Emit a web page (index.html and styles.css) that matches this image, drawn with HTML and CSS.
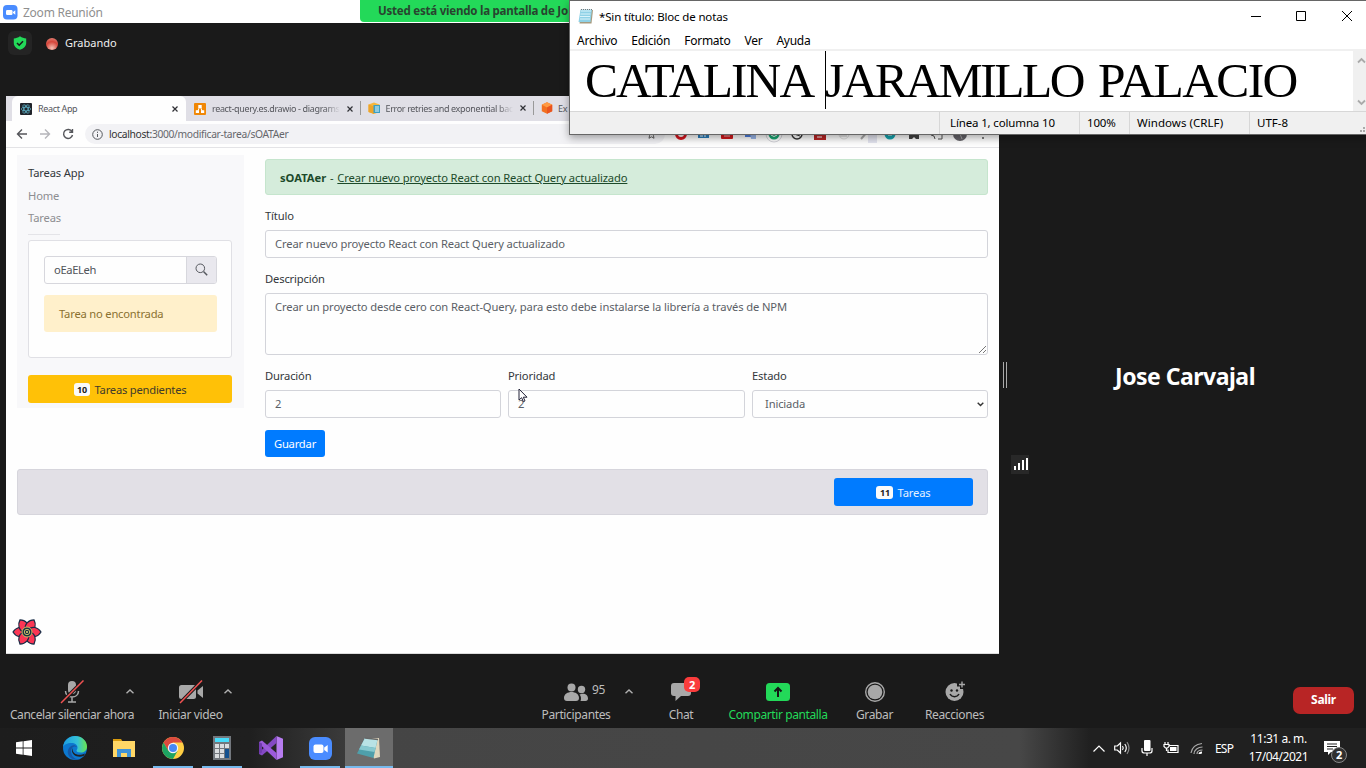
FILE: index.html
```html
<!DOCTYPE html>
<html lang="es">
<head>
<meta charset="utf-8">
<title>Zoom Reunión</title>
<link rel="stylesheet" href="styles.css">
</head>
<body>
<div class="desktop">
  <header class="zoom-title">
    <svg width="15" height="15" viewBox="0 0 15 15"><rect width="14.500" height="14.500" rx="4" fill="#4a8cff"/><rect x="3" y="5" width="6.500" height="5" rx="1.200" fill="#fff"/><path d="M10 7l2.300-1.700v4.400L10 8z" fill="#fff"/></svg>
    <span>Zoom Reunión</span>
  </header>
  <div class="sharing-banner">Usted está viendo la pantalla de Jo</div>

  <section class="meeting">
    <div class="meeting-status">
      <div class="shield"><svg width="14" height="14" viewBox="0 0 14 14"><path d="M7 0.300C9 1.700 11 2.200 13.200 2.400V7c0 3.200-2.700 5.600-6.200 6.800C3.500 12.600.8 10.200.8 7V2.400C3 2.200 5 1.700 7 .3z" fill="#23d959"/><path d="M4 7l2.200 2.200L10 5.200" fill="none" stroke="#1a1a1a" stroke-width="1.600"/></svg></div>
      <span class="rec-dot"></span>
      <span class="rec-label">Grabando</span>
    </div>

    <div class="stage">
      <div class="browser">
        <div class="tabs">
          <div class="tab tab-active">
            <svg width="12" height="12" viewBox="0 0 12 12"><rect width="12" height="12" rx="1" fill="#20232a"/><g fill="none" stroke="#61b9cf" stroke-width=".7"><ellipse cx="6" cy="6" rx="4.800" ry="1.900"/><ellipse cx="6" cy="6" rx="4.800" ry="1.900" transform="rotate(60 6 6)"/><ellipse cx="6" cy="6" rx="4.800" ry="1.900" transform="rotate(120 6 6)"/></g></svg>
            <span class="tab-name">React App</span><svg class="x" viewBox="0 0 6 6"><path d="M.5.5l5 5M5.500.5l-5 5"/></svg>
          </div>
          <div class="tab">
            <svg width="12" height="12" viewBox="0 0 12 12"><rect width="12" height="12" rx="1" fill="#f08705"/><path d="M6 3L3.500 9M6 3l2.500 6" stroke="#fff"/><path d="M4.300 2h3.400v3H4.300zM1.800 7.200H5V10H1.800zM7 7.200h3.200V10H7z" fill="#fff"/></svg>
            <span class="tab-name faded">react-query.es.drawio - diagrams</span><svg class="x" viewBox="0 0 6 6"><path d="M.5.5l5 5M5.500.5l-5 5"/></svg>
          </div>
          <div class="tab">
            <svg width="13" height="12" viewBox="0 0 13 12"><path d="M.5 2.500L6 .5l5.500 2V10L6 12 .5 10z" fill="#f6b73c"/><path d="M.5 2.500L6 4.500v7.500L.5 10z" fill="#eda42b"/><rect x="5.500" y="3" width="6.500" height="8" fill="#3b9fc4"/><path d="M7 5h4M7 7h4M7 9h4" stroke="#e6f6fb"/></svg>
            <span class="tab-name faded">Error retries and exponential bac</span><svg class="x" viewBox="0 0 6 6"><path d="M.5.5l5 5M5.500.5l-5 5"/></svg>
          </div>
          <div class="tab">
            <svg width="12" height="12" viewBox="0 0 12 12"><path d="M6 .3l5.200 2.500v6.400L6 11.800.8 9.200V2.800z" fill="#f27020"/><path d="M6 .3l5.200 2.500L6 5.500.8 2.800z" fill="#ff9a44"/><path d="M6 5.500l5.200-2.700v6.400L6 11.800z" fill="#e95420"/></svg>
            <span class="tab-name">Ex</span>
          </div>
        </div>
        <div class="navbar">
          <svg class="nav-icon" viewBox="0 0 12 12"><path d="M11 6H1.500M6 1.500L1.500 6 6 10.500"/></svg>
          <svg class="nav-icon dim" viewBox="0 0 12 12"><path d="M1 6h9.500M6 1.500L10.500 6 6 10.500"/></svg>
          <svg class="nav-icon" viewBox="0 0 12 12"><path d="M10 3.700A4.500 4.500 0 1 0 10.500 7M10.500 1v3.300H7.200"/></svg>
          <div class="address">
            <svg width="11" height="11" viewBox="0 0 11 11" fill="none" stroke="#55585d"><circle cx="5.500" cy="5.500" r="4.800"/><path d="M5.500 5v3M5.500 2.700v1.200"/></svg>
            <span><b>localhost:</b>3000/modificar-tarea/sOATAer</span>
            <svg class="star" width="9" height="9" viewBox="0 0 10 10"><path d="M5 .8l1.300 2.900 3.100.3-2.300 2.100.7 3.100L5 7.600 2.200 9.200l.7-3.100L.6 4l3.100-.3z" fill="none" stroke="#555"/></svg>
          </div>
          <svg class="extensions" width="314" height="24" viewBox="674 122 314 24">
            <circle cx="681" cy="134" r="4.500" fill="none" stroke="#d8151e" stroke-width="3"/>
            <rect x="698" y="129" width="11" height="9" fill="#2b7fbd"/><path d="M700 136h3M705 137v-4" stroke="#fff"/>
            <rect x="721" y="129" width="12" height="10" rx="1" fill="#d3191c"/><path d="M724 136h6" stroke="#fff" stroke-width=".7"/>
            <rect x="745" y="129" width="7" height="8" fill="#4d7fe0"/><path d="M750 132h6v7h-5z" fill="#9bb7ea"/>
            <circle cx="774" cy="134" r="8" fill="#fff" stroke="#d5d5db"/><circle cx="774" cy="134" r="5.500" fill="#19a974"/><path d="M771 135q3 3 6 0" fill="none" stroke="#fff"/>
            <circle cx="797" cy="134" r="5" fill="none" stroke="#333" stroke-width="1.500"/><path d="M794 134l6 2" stroke="#333"/>
            <rect x="814" y="129" width="12" height="11" fill="#b82525"/><path d="M817 137h5" stroke="#fff"/>
            <circle cx="844" cy="134" r="5" fill="none" stroke="#ddd"/><path d="M840 136h7" stroke="#ccc"/>
            <path d="M861 139l8-9" stroke="#aaa" stroke-width="2"/><rect x="868" y="134" width="9" height="9" fill="#e4e5f0"/>
            <circle cx="890" cy="134" r="5.500" fill="#14a5b0"/><path d="M888 135h4" stroke="#fff"/>
            <path d="M909 132h3c0-3 4-3 4 0h3v7h-3l-2-2-2 2h-3z" fill="#444"/>
            <path d="M931 131h11v8h-4M931 135q4 0 4 4" fill="none" stroke="#555"/>
            <circle cx="960" cy="134" r="7" fill="#66646a"/><path d="M954 133q5-4 8 6" stroke="#aaa" fill="none"/>
            <circle cx="983" cy="134" r="1" fill="#555"/><circle cx="983" cy="138" r="1" fill="#555"/>
          </svg>
        </div>

        <div class="page">
          <div class="columns">
            <aside class="sidebar">
              <a class="brand">Tareas App</a>
              <a class="side-link">Home</a>
              <a class="side-link">Tareas</a>
              <div class="side-rule"></div>
              <div class="search-card">
                <div class="search-group"><div class="search-input">oEaELeh</div><div class="search-btn"><svg width="13" height="13" viewBox="0 0 13 13" fill="none" stroke="#55585e"><circle cx="5.300" cy="5.300" r="4.300"/><path d="M8.500 8.500l3.700 3.700" stroke-width="1.500"/></svg></div></div>
                <div class="warning">Tarea no encontrada</div>
              </div>
              <div class="pending"><span class="count">10</span> <span>Tareas pendientes</span></div>
            </aside>
            <main class="form">
              <div class="success"><b>sOATAer</b> - <u>Crear nuevo proyecto React con React Query actualizado</u></div>
              <label>Título</label>
              <div class="field title-field">Crear nuevo proyecto React con React Query actualizado</div>
              <label>Descripción</label>
              <div class="field area"><span>Crear un proyecto desde cero con React-Query, para esto debe instalarse la librería a través de NPM</span><svg class="grip" width="7" height="7" viewBox="0 0 7 7"><path d="M0 7l7-7M4 7l3-3" stroke="#777"/></svg></div>
              <div class="row3">
                <div><label>Duración</label><div class="field">2</div></div>
                <div><label>Prioridad</label><div class="field prio">2<svg class="cursor" width="10" height="15" viewBox="0 0 10 15"><path d="M1 1v11l2.600-2.300 1.800 4 1.600-.8-1.700-3.700H9z" fill="#fff" stroke="#222238"/></svg></div></div>
                <div><label>Estado</label><div class="field select"><span>Iniciada</span><svg width="7" height="5" viewBox="0 0 7 5"><path d="M.7.7l2.800 2.800L6.300.7" fill="none" stroke="#333" stroke-width="1.400"/></svg></div></div>
              </div>
              <button class="save">Guardar</button>
            </main>
          </div>
          <footer class="page-foot"><div class="tasks"><span class="count">11</span> <span>Tareas</span></div></footer>
          <svg class="rq-logo" width="30" height="30" viewBox="-15 -15 30 30"><g fill="#fb3654" stroke="#172b46" stroke-width="1.200"><path d="M-2-3C-5-6-11-5-14 0-11 5-5 6-2 3z"/><path d="M-2-3C-5-6-11-5-14 0-11 5-5 6-2 3z" transform="rotate(60)"/><path d="M-2-3C-5-6-11-5-14 0-11 5-5 6-2 3z" transform="rotate(120)"/><path d="M-2-3C-5-6-11-5-14 0-11 5-5 6-2 3z" transform="rotate(180)"/><path d="M-2-3C-5-6-11-5-14 0-11 5-5 6-2 3z" transform="rotate(240)"/><path d="M-2-3C-5-6-11-5-14 0-11 5-5 6-2 3z" transform="rotate(300)"/></g><circle r="5" fill="#1a3044" stroke="#c6bd63"/><circle r="2.700" fill="none" stroke="#c6bd63"/><circle r="1" fill="#e9d970"/></svg>
        </div>
      </div>
      <div class="speaker">
        <div class="handle"></div>
        <div class="speaker-name">Jose Carvajal</div>
        <div class="signal"><i></i><i></i><i></i><i></i></div>
      </div>
    </div>

    <nav class="controls">
      <div class="ctl ctl-audio"><svg width="24" height="24" viewBox="0 0 24 24"><rect x="8" y="1" width="8" height="13" rx="4" fill="#a8a8a8"/><path d="M5.500 11c0 8 13 8 13 0M12 17v4.500M8 22h8" fill="none" stroke="#a8a8a8" stroke-width="1.500"/><path d="M1 23L23.500.5" stroke="#1a1a1a" stroke-width="3.500"/><path d="M1 23L23.500.5" stroke="#f05252" stroke-width="1.500"/></svg><span>Cancelar silenciar ahora</span><svg class="caret" viewBox="0 0 8 5"><path d="M.5 4.300L4 1l3.500 3.300"/></svg></div>
      <div class="ctl ctl-video"><svg width="26" height="24" viewBox="0 0 26 24"><rect x="1" y="5" width="17" height="14" rx="2.500" fill="#a8a8a8"/><path d="M19.500 10.500L25 6v12l-5.500-4.500z" fill="#a8a8a8"/><path d="M2 23L24 .5" stroke="#1a1a1a" stroke-width="3.500"/><path d="M2 23L24 .5" stroke="#f05252" stroke-width="1.500"/></svg><span>Iniciar video</span><svg class="caret" viewBox="0 0 8 5"><path d="M.5 4.300L4 1l3.500 3.300"/></svg></div>
      <div class="ctl ctl-people"><svg width="24" height="24" viewBox="0 0 24 24" fill="#a8a8a8"><circle cx="7.500" cy="7.500" r="4"/><circle cx="17.500" cy="9.500" r="3.700"/><path d="M0 18c0-8 15-8 15 0 0 2-1 3-3 3H3c-2 0-3-1-3-3zM16.500 21c1-2 .5-5-1-6.500 5-2 8.500.5 8.500 4 0 1.600-.8 2.500-2.500 2.500z"/></svg><span>Participantes</span><em>95</em><svg class="caret" viewBox="0 0 8 5"><path d="M.5 4.300L4 1l3.500 3.300"/></svg></div>
      <div class="ctl ctl-chat"><svg width="22" height="24" viewBox="0 0 22 24"><path d="M4 3h14q3 0 3 3v7q0 3-3 3h-7l-5.500 5v-5H4q-3 0-3-3V6q0-3 3-3z" fill="#a8a8a8"/></svg><span>Chat</span><strong>2</strong></div>
      <div class="ctl ctl-share"><svg width="24" height="24" viewBox="0 0 24 24"><rect y="3" width="24" height="18" rx="3.500" fill="#23d959"/><path d="M12 17V8M8.500 11.500L12 8l3.500 3.500" fill="none" stroke="#151515" stroke-width="2"/></svg><span>Compartir pantalla</span></div>
      <div class="ctl ctl-record"><svg width="22" height="24" viewBox="0 0 22 24"><circle cx="11" cy="12" r="9.300" fill="none" stroke="#a8a8a8" stroke-width="1.400"/><circle cx="11" cy="12" r="7.300" fill="#a8a8a8"/></svg><span>Grabar</span></div>
      <div class="ctl ctl-react"><svg width="24" height="24" viewBox="0 0 24 24"><circle cx="11.500" cy="12" r="9" fill="#a8a8a8"/><path d="M14 4.500h10M19 0v9" stroke="#1a1a1a" stroke-width="4"/><path d="M16 4.500h6M19 1.500v6" stroke="#a8a8a8" stroke-width="1.400"/><circle cx="8.500" cy="10.500" r="1.200" fill="#1a1a1a"/><circle cx="14" cy="10.500" r="1.200" fill="#1a1a1a"/><path d="M7 14c2 3.500 7 3.500 9 0" fill="none" stroke="#1a1a1a" stroke-width="1.500"/></svg><span>Reacciones</span></div>
      <div class="leave">Salir</div>
    </nav>
  </section>

  <footer class="taskbar">
    <div class="app start"><svg width="16" height="16" viewBox="0 0 16 16" fill="#fff"><path d="M0 2.300L6.700 1.300v6.200H0zM7.500 1.200L16 0v7.500H7.500zM0 8.400h6.700v6.300L0 13.700zM7.500 8.400H16V16l-8.500-1.200z"/></svg></div>
    <div class="app"><svg width="24" height="24" viewBox="0 0 24 24"><defs><linearGradient id="eg" x1="0" x2="1"><stop offset="0" stop-color="#1b9de2"/><stop offset=".6" stop-color="#35c1d8"/><stop offset="1" stop-color="#6ae64d"/></linearGradient></defs><circle cx="12" cy="12" r="12" fill="#0c78cf"/><path d="M0 11C1 4 6 0 12 0c7 0 12 5 12 10.500 0 4-3 6-6 6-3.500 0-4.500-1-4.500-2 0-.8 1-1 1-3C14.500 9 12 7 8.500 7 4 7 1 9 0 11z" fill="url(#eg)"/><path d="M9 12c-3 6 2 12 8 11-9 3-15-5-11-11 2-3 6-4 8-1-2-1-4-.5-5 1z" fill="#1557a5"/><path d="M10 12c-2 5 5 9 12 5.500l-1 2.300c-6 2.500-12-.5-12-5 0-1 .3-2 1-2.800z" fill="#202124"/></svg></div>
    <div class="app"><svg width="22" height="20" viewBox="0 0 22 20"><path d="M0 1h8l2 3H0z" fill="#d99b0d"/><rect y="3" width="22" height="16" fill="#ffd766"/><path d="M4 19v-8h14v8h-4v-4H8v4z" fill="#3f93d7"/></svg></div>
    <div class="app open"><svg width="22" height="22" viewBox="0 0 22 22"><circle cx="11" cy="11" r="11" fill="#ffce44"/><path d="M1.500 5.500A11 11 0 0 1 20.500 5.500H11L6.300 14z" fill="#db4a3e"/><path d="M1.500 5.500A11 11 0 0 0 11 22l4.500-8H6.500z" fill="#1da362"/><circle cx="11" cy="11" r="5.200" fill="#f5f5f5"/><circle cx="11" cy="11" r="4" fill="#4687f4"/></svg></div>
    <div class="app open"><svg width="18" height="24" viewBox="0 0 18 24"><rect width="18" height="24" fill="#72777d"/><rect x="2" y="2" width="14" height="4" fill="#48dcfa"/><path d="M2 8h4v4H2zM7 8h4v4H7zM12 8h4v4h-4zM2 13h4v4H2zM7 13h4v4H7zM2 18h4v4H2zM7 18h4v4H7z" fill="#dadde0"/><path d="M12 13h4v9h-4z" fill="#13508e"/></svg></div>
    <div class="app"><svg width="24" height="24" viewBox="0 0 24 24"><path d="M17.500 0L24 2.700v18.600L17.500 24z" fill="#b77cf0"/><path d="M17.500 0v7L3 19.500 0 18v-1.500z" fill="#8449c4"/><path d="M17.500 24v-7L3 4.500 0 6v1.500z" fill="#9c5bdb"/><path d="M0 6l3 1.500v9L0 18z" fill="#713bae"/></svg></div>
    <div class="app open"><svg width="23" height="23" viewBox="0 0 23 23"><rect width="23" height="23" rx="6" fill="#4a8cff"/><rect x="4.500" y="7.500" width="10" height="8.500" rx="2" fill="#fff"/><path d="M15.200 10.500l3.500-2.500v7.500l-3.500-2.500z" fill="#fff"/></svg></div>
    <div class="app open current"><svg width="24" height="22" viewBox="0 0 24 22"><path d="M8 1h14l1 19-6 1.500z" fill="#dfd6bd"/><path d="M8 1l12.500 1.500L16.500 21 0 16.500z" fill="#4f9fab"/><path d="M8 1l12.500 1.500-2 8.500L4 8.500z" fill="#b8e2e5"/><path d="M4 8.500L18.500 11l-1 4L2 12.500z" fill="#86c8cf"/><path d="M8 1l13 1.500" stroke="#666" stroke-width="1.500"/></svg></div>
    <div class="tray">
      <svg class="t1" width="14" height="9" viewBox="0 0 14 9"><path d="M1.500 7.500L7 2l5.500 5.500"/></svg>
      <svg class="t2" width="16" height="14" viewBox="0 0 16 14"><path d="M.7 5h2.600L6.500 2v10L3.300 9H.7zM8.500 5q1.500 2 0 4M10.800 3q3 4 0 8"/><path d="M13 1.200q4 5.800 0 11.600" stroke="#888"/></svg>
      <svg class="t3" width="12" height="16" viewBox="0 0 12 16"><rect x="3" width="6.500" height="11" rx="1" fill="#fff" stroke="none"/><path d="M1 8v3q0 2 2.500 2h5q2.500 0 2.500-2V8M6 13v3"/></svg>
      <svg class="t4" width="17" height="12" viewBox="0 0 17 12"><path d="M5.500 3.500H15v7H5v-3M2 0v2M5 0v2M1 2.500h5v2L4.500 6H2.500L1 4.500zM3.500 6v3"/><rect x="7" y="5" width="6.500" height="4" fill="#fff" stroke="none"/></svg>
      <svg class="t5" width="14" height="13" viewBox="0 0 14 13"><path d="M1 11C2 5 7 2 12 1.500M4 12c0-4 4-7 8.500-7M7 12c0-2.500 2.500-4 5.500-4" stroke="#aaa"/><path d="M9.500 12c0-1 1-1.500 2.500-1.500" stroke-width="2"/></svg>
      <span class="lang">ESP</span>
      <div class="clock"><span>11:31 a. m.</span><span>17/04/2021</span></div>
      <div class="notif"><svg width="16" height="15" viewBox="0 0 16 15"><path d="M0 0h16v11H7l-3 3v-3H0z" fill="#fff" stroke="none"/><path d="M3 3h10M3 5.500h10M3 8h6" stroke="#222"/></svg><b>2</b></div>
    </div>
  </footer>

  <section class="notepad">
    <div class="np-title">
      <svg width="16" height="16" viewBox="0 0 16 16"><path d="M3 2h12l-1.500 13.500H1.500z" fill="#a59a7f"/><path d="M2.500 1.500h11.500L12.500 14H.5z" fill="#8fd1e6"/><path d="M3 3h10M2.500 6h10M2 8.500h10M2 11h10" stroke="#d9f3fa"/><path d="M3 1.500h11" stroke="#777" stroke-dasharray="1 1"/></svg>
      <span class="np-name">*Sin título: Bloc de notas</span>
      <svg class="np-btns" width="102" height="12" viewBox="0 0 102 12" fill="none" stroke="#000"><path d="M1 6.500h10M46.500 1.500h9v9h-9zM92 1l10 10M102 1L92 11"/></svg>
    </div>
    <div class="np-menu"><span>Archivo</span><span>Edición</span><span>Formato</span><span>Ver</span><span>Ayuda</span></div>
    <div class="np-body">
      <div class="np-text"><span class="w1">CATALINA</span><i class="np-caret"></i><span class="w2">JARAMILLO</span><span class="w3">PALACIO</span></div>
      <div class="np-scroll"><svg width="9" height="7" viewBox="0 0 9 7"><path d="M1 5.500L4.500 2 8 5.500"/></svg><svg width="9" height="7" viewBox="0 0 9 7"><path d="M1 1.500L4.500 5 8 1.500"/></svg></div>
    </div>
    <div class="np-status"><span class="s0"></span><span class="s1">Línea 1, columna 10</span><span class="s2">100%</span><span class="s3">Windows (CRLF)</span><span class="s4">UTF-8</span>
      <svg class="np-grip" width="5" height="5" viewBox="0 0 5 5" fill="#aaa"><path d="M3 0h2v2H3zM0 3h2v2H0zM3 3h2v2H3z"/></svg></div>
  </section>
</div>
</body>
</html>
```
FILE: styles.css
```css
* { box-sizing: border-box; }
body { margin: 0; font-family: "Noto Sans", "Open Sans", sans-serif; font-size: 12px; }
svg { display: block; flex: none; }
.desktop { position: relative; width: 1366px; height: 768px; overflow: hidden; display: flex; flex-direction: column; background: #1a1a1a; }

/* Zoom window */
.zoom-title { height: 23px; background: #fff; display: flex; align-items: center; gap: 5px; padding: 1px 0 0 3px; color: #8f8f8f; font-size: 12px; letter-spacing: -.25px; }
.sharing-banner { position: absolute; left: 360px; top: 0; width: 300px; height: 22px; padding-left: 18px; line-height: 22px; background: #23d959; border-radius: 0 0 4px 4px; color: #28442f; font-weight: 700; font-size: 11.500px; letter-spacing: -.22px; white-space: nowrap; }
.meeting { flex: 1; display: flex; flex-direction: column; }
.meeting-status { height: 73px; padding: 8px 0 0 8px; display: flex; align-items: flex-start; }
.shield { width: 24px; height: 24px; border-radius: 6px; background: #242424; display: flex; align-items: center; justify-content: center; }
.rec-dot { width: 12px; height: 12px; margin: 7px 7px 0 14px; border-radius: 50%; background: radial-gradient(circle at 50% 85%, #f7c1b5, #d6453a 55%, #e59387); }
.rec-label { color: #f0f0f0; font-size: 11px; line-height: 24px; }
.stage { height: 558px; display: flex; padding-left: 6px; }
.browser { width: 993px; background: #fefefe; display: flex; flex-direction: column; }

/* browser chrome */
.tabs { height: 25px; background: #e0dfe6; display: flex; padding-left: 6px; }
.tab { width: 173.500px; display: flex; align-items: center; padding: 0 8px 0 8px; color: #55565c; font-size: 9px; }
.tab svg:first-child { margin-right: 6px; }
.tab + .tab + .tab { border-left: 1px solid #999; height: 14px; margin-top: 5px; padding-left: 7px; }
.tab + .tab + .tab svg:first-child { margin-right: 5px; }
.tab-active { width: 174px; background: #fefefe; border-radius: 6px 6px 0 0; }
.tab-name { flex: 1; white-space: nowrap; margin-right: 7px; letter-spacing: -.35px; }
.faded { -webkit-mask-image: linear-gradient(90deg, #000 88%, transparent); mask-image: linear-gradient(90deg, #000 88%, transparent); }
.x { width: 6px; height: 6px; fill: none; stroke: #303136; stroke-width: 1.200; }
.navbar { height: 27px; border-bottom: 1px solid #e3e3e6; display: flex; align-items: center; padding-left: 10px; }
.nav-icon { width: 12px; height: 12px; margin-right: 11px; fill: none; stroke: #55565b; stroke-width: 1.400; }
.nav-icon.dim { stroke: #b5b5ba; }
.address { width: 580px; height: 20px; border-radius: 10px; background: #f2f2f5; display: flex; align-items: center; padding: 0 9px 0 7px; gap: 6px; color: #66676c; font-size: 10.300px; letter-spacing: -.34px; }
.address b { font-weight: 400; color: #333; }
.star { margin-left: auto; }
.extensions { margin-left: 9px; }

/* task application */
.page { position: relative; flex: 1; padding: 7px 11px 0; color: #33373b; font-size: 11.200px; letter-spacing: -.15px; border-bottom: 1px solid #ddd; }
.columns { display: flex; height: 314px; gap: 21px; }
.sidebar { width: 227px; height: 253px; background: #f8f8fa; padding: 7px 12px 0 11px; display: flex; flex-direction: column; }
.brand, .side-link { height: 22.500px; line-height: 22px; }
.side-link { color: #8d8e91; line-height: 21px; }
.side-rule { width: 32px; border-bottom: 1px solid #e4e4e8; height: 5px; }
.search-card { margin-top: 5px; height: 118px; border: 1px solid #e0e0e5; border-radius: 3px; background: #fefefe; padding: 15px 14px 0 15px; }
.search-group { display: flex; height: 28px; border: 1px solid #d7d7dd; border-radius: 3px; overflow: hidden; line-height: 26px; }
.search-input { flex: 1; padding-left: 9px; color: #50545a; letter-spacing: -.35px; }
.search-btn { width: 30px; background: #e9e8ee; border-left: 1px solid #d7d7dd; display: flex; align-items: center; justify-content: center; }
.warning { margin-top: 11px; height: 37px; line-height: 37px; padding-left: 15px; border-radius: 3px; background: #fff0cb; color: #8a7130; letter-spacing: -.2px; }
.pending, .tasks { display: flex; align-items: center; justify-content: center; gap: 4px; border-radius: 3px; height: 28px; }
.pending { margin-top: 17px; background: #ffc107; color: #403a2c; letter-spacing: -.22px; padding-top: 1px; }
.count { height: 13px; line-height: 13px; padding: 0 3.500px; border-radius: 3px; background: #fafafa; color: #222; font-size: 9px; font-weight: 700; }
.form { width: 723px; padding-top: 4px; }
.form label { display: block; height: 35px; line-height: 41px; }
.success { height: 36px; line-height: 35px; padding-left: 14px; border: 1px solid #c5e5cd; border-radius: 3px; background: #d5ecdb; color: #1c4a2a; letter-spacing: -.12px; white-space: nowrap; }
.success b { letter-spacing: 0; margin-right: 1px; }
.success u { margin-left: 1px; }
.field { position: relative; height: 28px; line-height: 26px; border: 1px solid #d3d4da; border-radius: 3px; padding-left: 9px; color: #5b5f66; }
.title-field { letter-spacing: -.12px; }
.area { height: 62px; white-space: nowrap; letter-spacing: -.11px; }
.grip { position: absolute; right: 1px; bottom: 1px; }
.row3 { display: grid; grid-template-columns: 236px 237px 236px; gap: 7px; }
.cursor { position: absolute; left: 9px; top: -3px; }
.select { display: flex; align-items: center; justify-content: space-between; padding: 0 3px 0 12px; }
.save { display: block; margin-top: 12px; width: 60px; height: 27px; border: 0; border-radius: 3px; background: #007bff; color: #fff; font: inherit; letter-spacing: -.2px; padding: 0 0 1px; }
.page-foot { width: 971px; height: 46px; border: 1px solid #d6d5dc; border-radius: 3px; background: #e2e0e6; display: flex; justify-content: flex-end; align-items: center; padding-right: 14px; }
.tasks { width: 139px; background: #007bff; color: #e4f1ff; }
.rq-logo { position: absolute; left: 6px; bottom: 6px; }

/* speaker pane */
.speaker { flex: 1; position: relative; display: flex; align-items: center; justify-content: center; }
.handle { position: absolute; left: 4px; top: 266px; width: 4px; height: 26px; border: 1px solid #aaa; border-width: 0 1px; }
.speaker-name { color: #fff; font: 700 23px "Noto Sans", sans-serif; white-space: nowrap; margin: 2px 0 0 5px; letter-spacing: -.5px; }
.signal { position: absolute; left: 12px; top: 359px; width: 18px; height: 19px; background: #282828; display: flex; align-items: flex-end; gap: 2px; padding: 0 0 4px 3px; }
.signal i { width: 2px; height: 4px; background: #fff; }
.signal i:nth-child(2) { height: 7px; } .signal i:nth-child(3) { height: 10px; } .signal i:nth-child(4) { height: 12px; }

/* meeting controls */
.controls { height: 74px; padding-top: 26px; display: flex; }
.ctl { position: relative; display: flex; flex-direction: column; align-items: center; color: #bdbdbd; font-size: 12px; letter-spacing: -.36px; white-space: nowrap; }
.ctl > span { line-height: 20px; margin-top: 1px; }
.ctl-audio { width: 144px; letter-spacing: -.45px; } .ctl-video { width: 93px; } .ctl-people { width: 96px; margin-left: 291px; } .ctl-chat { width: 98px; margin-left: 8px; } .ctl-share { width: 96px; } .ctl-record { width: 97px; } .ctl-react { width: 63px; }
.ctl-share { color: #23d959; letter-spacing: -.4px; }
.caret { position: absolute; top: 9px; width: 8px; height: 5px; fill: none; stroke: #b0b0b0; stroke-width: 1.400; }
.ctl-audio .caret { left: 126px; } .ctl-video .caret { left: 80px; } .ctl-people .caret { left: 97px; }
.ctl em { position: absolute; left: 64px; top: 1px; font-style: normal; }
.ctl strong { position: absolute; left: 52px; top: -3px; width: 16px; height: 15px; border-radius: 5px; background: #fa3c3c; color: #fff; font-size: 11px; line-height: 15px; text-align: center; }
.leave { margin: -7px 12px 0 auto; width: 61px; height: 27px; line-height: 26px; border-radius: 7px; background: #b82525; color: #fff; font-weight: 700; text-align: center; letter-spacing: -.3px; align-self: center; }

/* Windows taskbar */
.taskbar { height: 40px; display: flex; gap: 1px; background: linear-gradient(90deg, #1d1d1d 0, #1f1f1f 250px, #454545 380px, #474747 1020px, #202020 1090px, #202020); }
.app { width: 48px; display: flex; align-items: center; justify-content: center; position: relative; }
.start { margin-right: 2px; }
.open::after { content: ""; position: absolute; bottom: 0; left: 4px; width: 40px; height: 2px; background: #76b9ed; }
.current { background: #6c6c6c; }
.current::after { left: 0; width: 48px; }
.tray { margin-left: auto; width: 276px; display: flex; align-items: center; color: #fff; letter-spacing: -.45px; }
.tray svg { fill: none; stroke: #fff; stroke-width: 1.200; }
.t1 { margin: 0 8px 0 2px; } .t2 { margin-right: 11px; } .t3 { margin-right: 10px; } .t4 { margin-right: 10px; } .t5 { margin-right: 11px; }
.lang { width: 32px; letter-spacing: -.8px; }
.clock { width: 63px; display: flex; flex-direction: column; align-items: center; line-height: 18px; white-space: nowrap; }
.notif { position: relative; margin-left: 14px; }
.notif b { position: absolute; left: 7px; top: 6px; width: 16px; height: 16px; border: 1px solid #888; border-radius: 50%; background: #303030; font-size: 11px; line-height: 14px; text-align: center; }

/* Notepad */
.notepad { position: absolute; left: 569px; top: 0; width: 798px; height: 135px; border: 1px solid #666; background: #fff; box-shadow: 0 3px 8px rgba(0,0,0,.35); display: flex; flex-direction: column; color: #000; font-size: 11.500px; letter-spacing: -.15px; }
.np-title { flex: none; height: 30px; display: flex; align-items: center; padding: 0 14px 0 8px; gap: 5px; }
.np-btns { margin-left: auto; }
.np-menu { flex: none; height: 18px; line-height: 19px; display: flex; gap: 14px; padding-left: 7px; font-size: 12px; letter-spacing: -.25px; }
.np-body { flex: none; height: 62px; border-top: 2px solid #f0f0f0; display: flex; }
.np-text { flex: 1; display: flex; padding-left: 15px; font: 49.500px/60px "Liberation Serif", serif; white-space: nowrap; }
.w1 { width: 240px; letter-spacing: -1.900px; } .w2 { width: 273px; letter-spacing: -2.500px; } .w3 { letter-spacing: -1.600px; }
.np-caret { width: 1px; margin-right: -1px; height: 58px; background: #000; }
.np-scroll { width: 13px; background: #f0f0f0; display: flex; flex-direction: column; justify-content: space-between; align-items: flex-end; padding: 6px 0 5px; }
.np-scroll path { fill: none; stroke: #aaa; stroke-width: 1.800; }
.np-status { position: relative; flex: 1; border-top: 1px solid #d7d7d7; background: #f0f0f0; display: flex; line-height: 22px; }
.np-status span { padding-left: 10px; border-right: 1px solid #d7d7d7; white-space: nowrap; }
.s0 { width: 370px; } .s1 { width: 140px; } .np-status .s2 { width: 50px; padding-left: 7px; } .np-status .s3 { width: 120px; padding-left: 7px; letter-spacing: .05px; } .np-status .s4 { border: 0; padding-left: 7px; letter-spacing: 0; }
.np-grip { position: absolute; right: 1px; bottom: 2px; }
```
